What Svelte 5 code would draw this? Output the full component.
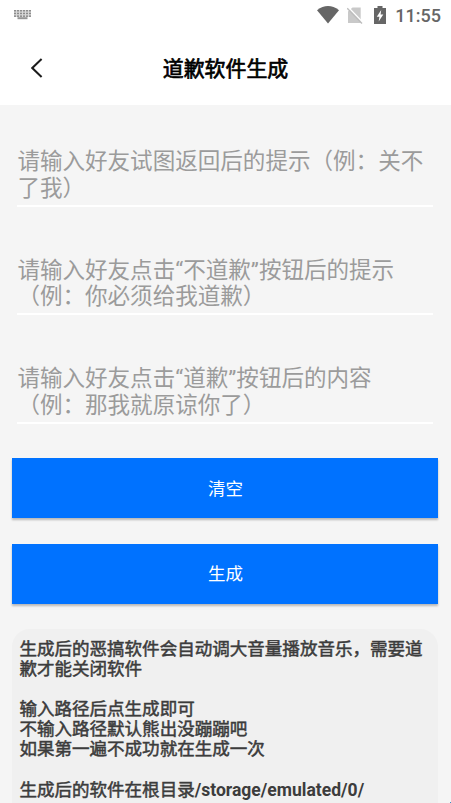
<script>
  const fields = [
    { id: 'back', hint: '请输入好友试图返回后的提示（例：关不了我）' },
    { id: 'refuse', hint: '请输入好友点击“不道歉”按钮后的提示（例：你必须给我道歉）' },
    { id: 'accept', hint: '请输入好友点击“道歉”按钮后的内容（例：那我就原谅你了）' }
  ]

  let values = { back: '', refuse: '', accept: '' }

  const clearAll = () => {
    values = { back: '', refuse: '', accept: '' }
  }

  const keyRows = [0, 3, 6]
  const keyCols = [0, 3, 6, 9, 12, 15]
</script>

<div class="screen">
  <div class="status-bar">
    <svg class="keyboard" width="18" height="10" viewBox="0 0 18 10">
      <rect width="17" height="7" fill="#d9d9d9" />
      {#each keyRows as y}
        {#each keyCols as x}
          <rect {x} y={y * 0.9} width="2" height="1.5" fill="#8c8c8c" />
        {/each}
      {/each}
      <rect x="3.5" y="7.2" width="10" height="2" fill="#969696" />
    </svg>
    <div class="status-icons">
      <svg class="wifi" width="22" height="18" viewBox="0 0 22 18">
        <path d="M0 4.2Q11 -4.2 22 4.2L11 17.6Z" fill="#666" />
      </svg>
      <svg class="sim" width="16" height="17" viewBox="0 0 16 17">
        <path d="M5.5 0.5H13.7V16H1V4.6Z" fill="#c9c9c9" />
        <path d="M1.2 0.2L16 15.4" stroke="#fff" stroke-width="1.4" />
        <path d="M0.2 1.2L15 16.4" stroke="#bdbdbd" stroke-width="1.4" />
      </svg>
      <svg class="battery" width="12" height="19" viewBox="0 0 12 19">
        <path d="M3.5 0H8.5V2H12V18H0V2H3.5Z" fill="#666" />
        <path d="M7.2 4L2.8 10.7H5.4L4.7 15.5L9.3 8.6H6.6Z" fill="#fff" />
      </svg>
      <span class="clock">11:55</span>
    </div>
  </div>

  <header>
    <button class="back" aria-label="返回">
      <svg width="12" height="20" viewBox="0 0 12 20">
        <path d="M10.6 1L1.3 10L10.6 19" fill="none" stroke="#1c1c1c" stroke-width="2" />
      </svg>
    </button>
    <h1>道歉软件生成</h1>
  </header>

  <main>
    <div class="fields">
      {#each fields as field (field.id)}
        <textarea rows="2" placeholder={field.hint} bind:value={values[field.id]}></textarea>
      {/each}
    </div>

    <button class="action" on:click={clearAll}>清空</button>
    <button class="action">生成</button>

    <div class="notes">
      <p>生成后的恶搞软件会自动调大音量播放音乐，需要道歉才能关闭软件</p>
      <p>输入路径后点生成即可<br />不输入路径默认熊出没蹦蹦吧<br />如果第一遍不成功就在生成一次</p>
      <p>生成后的软件在根目录<b>/storage/emulated/0/</b></p>
    </div>
  </main>
  <span class="corner"></span>
</div>

<style>
  :global(body) {
    background: #f5f5f5;
  }

  .screen {
    position: relative;
    height: 803px;
    display: flex;
    flex-direction: column;
    overflow: hidden;
    background: #f5f5f5;
    font-family: Roboto, "Noto Sans CJK SC", sans-serif;
  }

  .status-bar {
    flex: none;
    height: 30px;
    display: flex;
    justify-content: space-between;
    align-items: center;
    padding: 0 10px 0 14px;
    background: #fff;
  }

  .status-icons {
    display: flex;
    align-items: center;
  }

  svg {
    display: block;
  }

  .sim {
    margin-left: 8px;
  }

  .battery {
    margin-left: 11px;
  }

  .clock {
    margin-left: 9px;
    padding-top: 2px;
    color: #666;
    font-size: 18px;
    font-weight: 500;
    line-height: 28px;
  }

  header {
    flex: none;
    height: 75px;
    display: grid;
    grid-template-columns: 73px 1fr 73px;
    align-items: center;
    background: #fff;
  }

  button {
    border: none;
    font-family: inherit;
  }

  .back {
    padding: 0 0 0 31px;
    background: none;
  }

  h1 {
    margin: 0;
    padding-bottom: 2px;
    text-align: center;
    color: #000;
    font-size: 20.9px;
    font-weight: 400;
    -webkit-text-stroke: 0.7px #000;
  }

  main {
    flex: 1;
    display: flex;
    flex-direction: column;
    min-height: 0;
    padding: 0 12.6px 0 12.4px;
  }

  .fields {
    display: flex;
    flex-direction: column;
    gap: 49px;
    padding: 42px 5px 34.4px;
  }

  textarea {
    display: block;
    box-sizing: border-box;
    width: 100%;
    height: 59.7px;
    padding: 2px 0 0;
    border: none;
    border-bottom: 2px solid #fff;
    border-radius: 0;
    outline: none;
    resize: none;
    overflow: hidden;
    background: none;
    color: #333;
    font-family: inherit;
    font-size: 22.55px;
    line-height: 26.8px;
  }

  textarea::placeholder {
    color: #9b9b9b;
    opacity: 1;
  }

  .action {
    flex: none;
    height: 60px;
    margin-bottom: 25.4px;
    padding: 0 6px 2px;
    background: #0072ff;
    color: #fff;
    font-size: 17.5px;
    box-shadow: 0 2px 2px rgba(0, 0, 0, 0.25);
  }

  .notes {
    flex: none;
    height: 220px;
    padding: 10px 7px;
    border-radius: 18px;
    background: #f0f0f0;
    color: #3c3c3c;
    font-size: 17.55px;
    line-height: 20.05px;
    -webkit-text-stroke: 0.5px #3c3c3c;
  }

  .notes p {
    margin: 0 0 20.05px;
  }

  .notes b {
    -webkit-text-stroke: 0;
  }

  .corner {
    position: absolute;
    right: 0;
    bottom: 0;
    width: 1px;
    height: 1px;
    background: #3c8fc4;
  }
</style>
